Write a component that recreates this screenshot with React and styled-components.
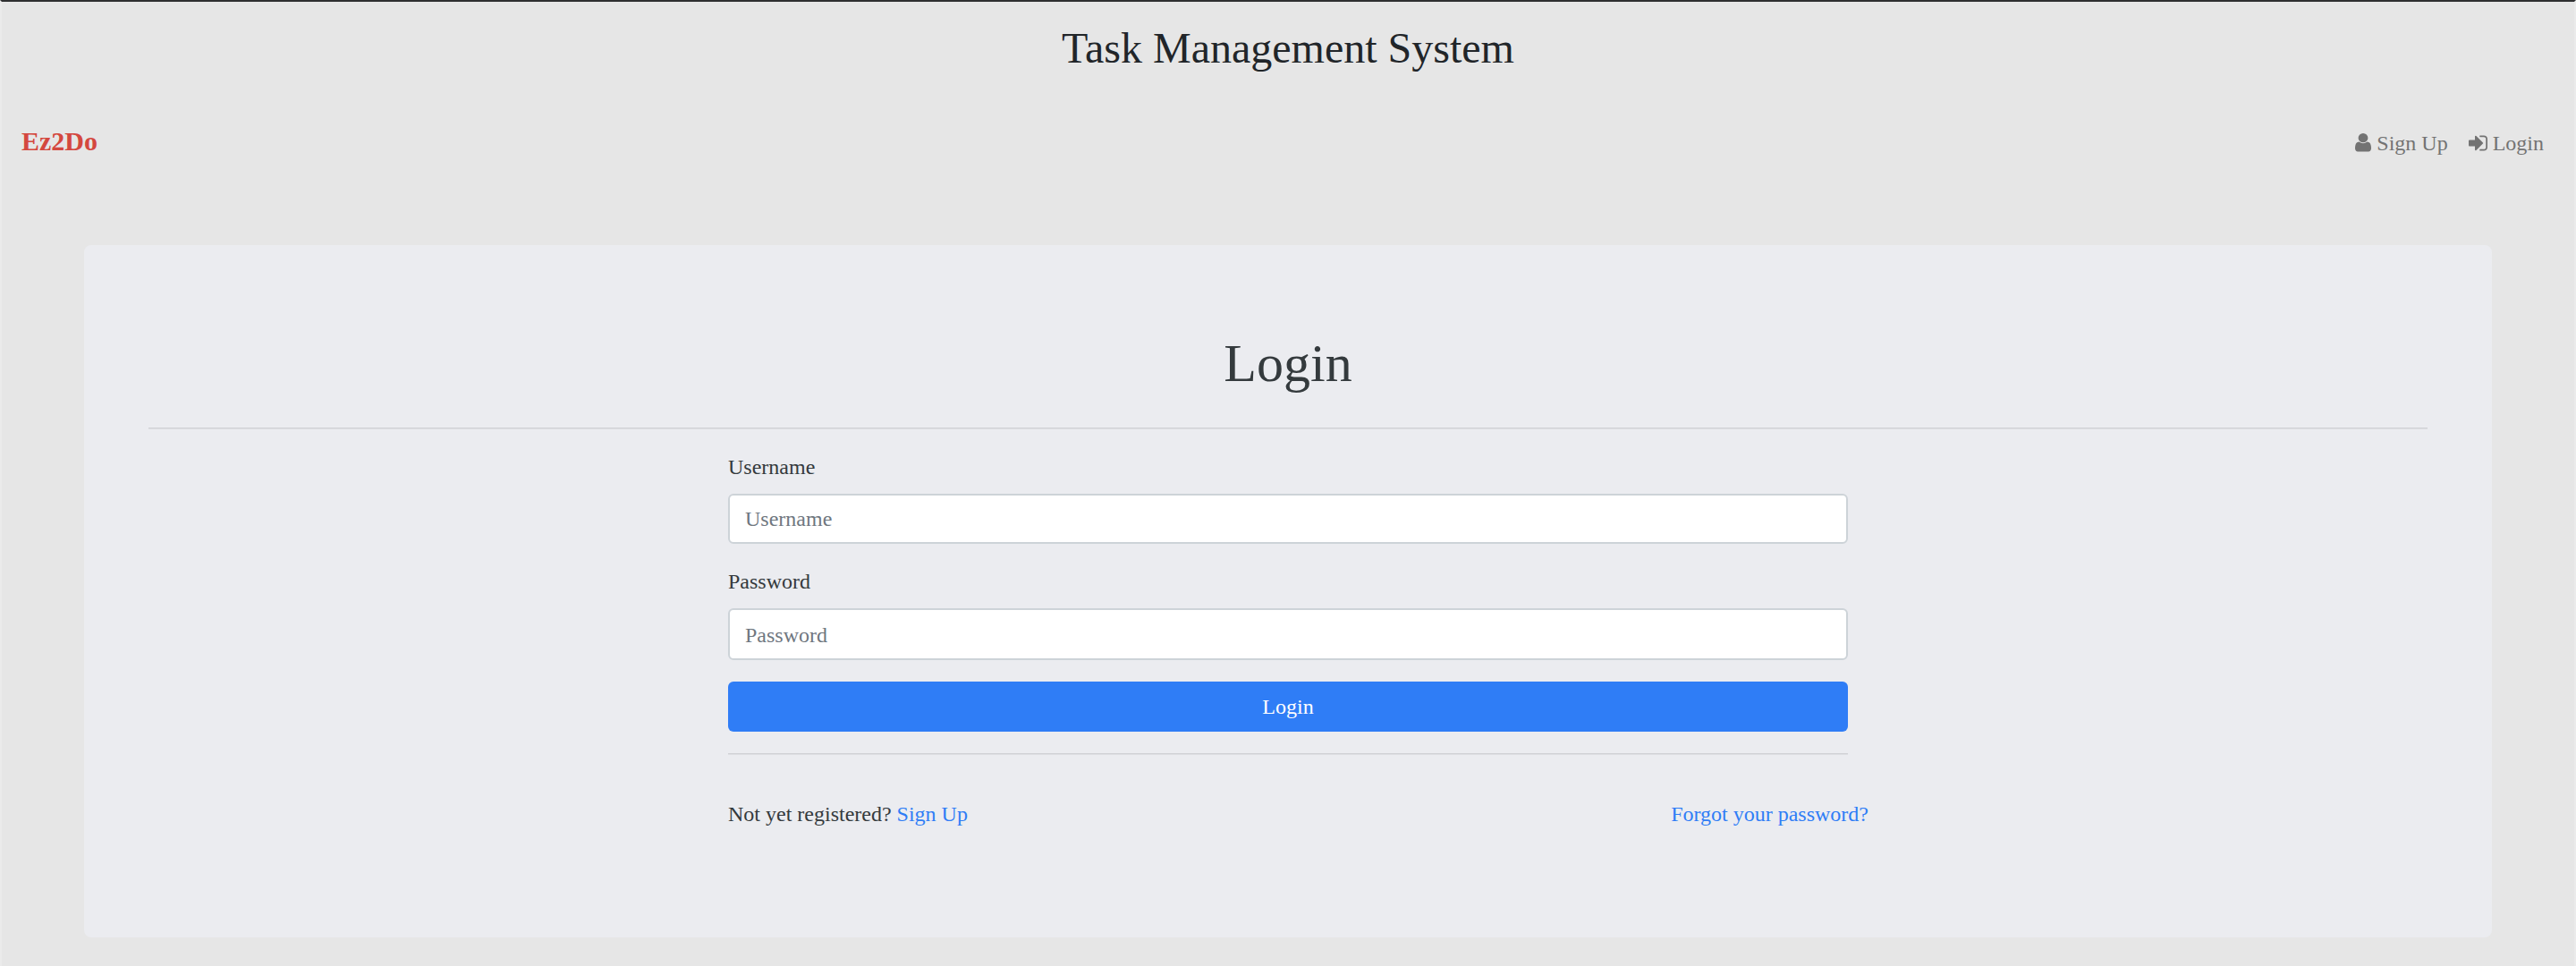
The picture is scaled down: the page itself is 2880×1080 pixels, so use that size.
import React from "react";
import styled, { createGlobalStyle } from "styled-components";

const GlobalStyle = createGlobalStyle`
  *, *::before, *::after { box-sizing: border-box; }
  body {
    margin: 0;
    background: #e6e6e6;
    color: #212529;
    font-family: "Liberation Serif", "Times New Roman", serif;
    font-size: 24px;
    line-height: 36px;
  }
`;

const Page = styled.div`
  height: 1080px;
  overflow: hidden;
  display: flex;
  flex-direction: column;
  border: 2px solid #ebebeb;
  border-top-color: #2e2f30;
  border-bottom: 0;
`;

const SiteTitle = styled.h2`
  margin: 23px 0 0;
  font-size: 48px;
  line-height: 58px;
  font-weight: 400;
  text-align: center;
`;

const Navbar = styled.nav`
  display: flex;
  align-items: center;
  justify-content: space-between;
  height: 60px;
  margin-top: 45px;
  padding: 0 34px 0 22px;
`;

const Brand = styled.a`
  padding-bottom: 2px;
  color: #d4483f;
  font-size: 30px;
  line-height: 45px;
  font-weight: 700;
`;

const NavLinks = styled.div`
  display: flex;
  gap: 23px;
`;

const NavLink = styled.a`
  display: flex;
  align-items: center;
  gap: 6px;
  padding-top: 4px;
  color: #737373;
`;

const Icon = styled.svg`
  display: block;
  margin-top: ${({ $drop = 0 }) => $drop}px;
  fill: currentColor;
`;

const Card = styled.main`
  display: flex;
  flex-direction: column;
  height: 774px;
  margin: 86px 92px 0;
  padding: 96px 72px;
  border-radius: 8px;
  background: #ebecf0;
  color: #343a3d;
`;

const Heading = styled.h1`
  margin: 0;
  font-size: 60px;
  line-height: 72px;
  font-weight: 400;
  text-align: center;
`;

const Divider = styled.hr`
  flex: none;
  width: 100%;
  height: 2px;
  margin: ${({ $top }) => $top}px 0 0;
  border: 0;
  background: linear-gradient(#d0d1d5 50%, #dddee2 50%);
`;

const Form = styled.form`
  display: flex;
  flex-direction: column;
  align-self: center;
  width: 1252px;
  padding-top: 24px;
`;

const Field = styled.div`
  display: flex;
  flex-direction: column;
  gap: 12px;
  margin-bottom: 24px;
`;

const Input = styled.input`
  height: ${({ $height }) => $height}px;
  padding: ${({ $nudge = 0 }) => $nudge}px 17px 0;
  border: 2px solid #cdd3d8;
  border-radius: 6px;
  background: #fff;
  color: #495057;
  font: inherit;
  &::placeholder { color: #6f777f; opacity: 1; }
`;

const Submit = styled.button`
  height: 56px;
  padding: 0;
  border: 0;
  border-radius: 6px;
  background: #2f7df6;
  color: #fff;
  font: inherit;
`;

const Footer = styled.div`
  display: flex;
  justify-content: space-between;
  margin: 48px -23px 0 0;
`;

const Link = styled.a`
  color: #2f7df6;
`;

function SignInIcon() {
  return (
    <Icon width="21" height="24" viewBox="0 0 1536 1792" preserveAspectRatio="none" $drop={-1}>
      <path d="M1184 896q0 26-19 45l-544 544q-19 19-45 19t-45-19-19-45v-288H64q-26 0-45-19T0 1088V704q0-26 19-45t45-19h448V352q0-26 19-45t45-19 45 19l544 544q19 19 19 45zm352-352v704q0 119-84.500 203.500T1248 1536H928q-13 0-22.500-9.500T896 1504q0-4-1-20t-.5-26.500 3-23.500 10-19.500 20.500-6.500h320q66 0 113-47t47-113V544q0-66-47-113t-113-47H936l-11.500-1-11.500-3-8-5.500-7-9-2-13.500q0-4-1-20t-.5-26.500 3-23.500 10-19.500 20.500-6.500h320q119 0 203.500 84.500T1536 544z" />
    </Icon>
  );
}

function UserIcon() {
  return (
    <Icon width="18" height="24" viewBox="0 0 1280 1792" preserveAspectRatio="none" $drop={2}>
      <path d="M1280 1271q0 109-62.500 187t-150.500 78H213q-88 0-150.500-78T0 1271q0-85 8.500-160.500t31.500-152 58.500-131 94-89T327 704q131 128 313 128t313-128q76 0 134.500 34.500t94 89 58.500 131 31.500 152 8.500 160.500zm-256-887q0 159-112.500 271.500T640 768 368.500 655.500 256 384t112.500-271.500T640 0t271.500 112.500T1024 384z" />
    </Icon>
  );
}

export default function App() {
  return (
    <>
      <GlobalStyle />
      <Page>
        <SiteTitle>Task Management System</SiteTitle>
        <Navbar>
          <Brand>Ez2Do</Brand>
          <NavLinks>
            <NavLink><UserIcon />Sign Up</NavLink>
            <NavLink><SignInIcon />Login</NavLink>
          </NavLinks>
        </Navbar>
        <Card>
          <Heading>Login</Heading>
          <Divider $top={36} />
          <Form onSubmit={(e) => e.preventDefault()}>
            <Field>
              <label htmlFor="username">Username</label>
              <Input id="username" $height={56} placeholder="Username" />
            </Field>
            <Field>
              <label htmlFor="password">Password</label>
              <Input id="password" $height={58} $nudge={2} type="password" placeholder="Password" />
            </Field>
            <Submit>Login</Submit>
            <Divider $top={24} />
            <Footer>
              <span>Not yet registered? <Link>Sign Up</Link></span>
              <Link>Forgot your password?</Link>
            </Footer>
          </Form>
        </Card>
      </Page>
    </>
  );
}
